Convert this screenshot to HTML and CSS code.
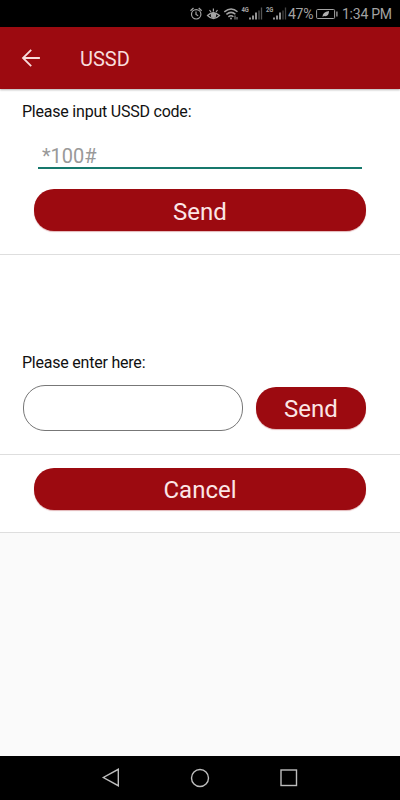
FILE: index.html
```html
<!DOCTYPE html>
<html lang="en">
<head>
<meta charset="utf-8">
<title>USSD</title>
<link rel="stylesheet" href="styles.css">
</head>
<body>
<div class="screen">
  <div class="status">
    <svg class="signals" width="100" height="26" viewBox="0 0 100 26" fill="none" stroke="#a3a3a3" stroke-width="1.2">
      <circle cx="8.2" cy="14.3" r="4.7"/><path d="M8 11.5v3l2.2 1.3M2.5 10.8l3-2.8M13.7 10.8l-3-2.8"/>
      <path d="M19.5 15.5q5.5-5.5 12 0q-6 6-12 0zM21.5 10l1.5 2M25.4 8.5v3M29.5 10l-1.5 2"/><circle cx="25.5" cy="15.3" r="2.1" fill="#a3a3a3"/>
      <path d="M36.3 11.8q7-5.5 13.2 0M38.4 14.3q4.8-3.8 9 0M40.4 16.8q2.7-2 5 0" stroke-width="1.5"/><circle cx="43" cy="18.4" r="1" fill="#a3a3a3" stroke="none"/><path d="M47 15.5v4M49 17v2.5" stroke-width="1"/>
      <text x="53.5" y="12" class="net" textLength="7" lengthAdjust="spacingAndGlyphs">4G</text>
      <path d="M62 19.5v-2M65 19.5v-4M68 19.5v-7" stroke-width="1.8"/><path d="M71 19.5v-9M73.5 19.5v-12" stroke="#555" stroke-width="1.3"/>
      <text x="78" y="12" class="net" textLength="7" lengthAdjust="spacingAndGlyphs">2G</text>
      <path d="M86 19.5v-2M89 19.5v-4M92 19.5v-7" stroke-width="1.8"/><path d="M95 19.5v-9M97.5 19.5v-12" stroke="#444" stroke-width="1.3"/>
    </svg>
    <span class="percent">47%</span>
    <svg class="battery" width="23" height="26" viewBox="0 0 23 26" fill="none" stroke="#a3a3a3"><rect x="1.6" y="9.5" width="18" height="9" rx="1"/><path d="M21.9 11.5v5" stroke-width="1.3"/><path d="M7.5 17q-.2-5 6.5-6q0 6-5 5z" fill="#b0b0b0" stroke="none"/></svg>
    <span class="clock">1:34 PM</span>
  </div>
  <header class="appbar">
    <svg width="20" height="20" viewBox="0 0 20 20" fill="none" stroke="#f8dcdc" stroke-width="1.8"><path d="M18.9 10H2.2M10.2 1.8L2 10l8.2 8.2"/></svg>
    <h1>USSD</h1>
  </header>
  <main>
    <section class="code">
      <label>Please input USSD code:</label>
      <div class="field">*100#</div>
      <button class="wide">Send</button>
    </section>
    <section class="reply">
      <label>Please enter here:</label>
      <div class="row">
        <input type="text" aria-label="Reply">
        <button>Send</button>
      </div>
    </section>
    <section class="cancel">
      <button class="wide">Cancel</button>
    </section>
  </main>
  <nav>
    <svg width="20" height="20" viewBox="0 0 20 20"><path d="M17.3 1.3v16.4L2.4 9.5z"/></svg>
    <svg width="20" height="20" viewBox="0 0 20 20"><circle cx="10" cy="10" r="8.5"/></svg>
    <svg width="20" height="20" viewBox="0 0 20 20"><rect x="2" y="2" width="15.5" height="15.5"/></svg>
  </nav>
</div>
</body>
</html>
```
FILE: styles.css
```css
* { box-sizing: border-box; }
body { margin: 0; font-family: Roboto, sans-serif; background: #fafafa; }
.screen { width: 400px; height: 800px; display: flex; flex-direction: column; overflow: hidden; }
.status { height: 27px; flex: none; background: #000; color: #a3a3a3; display: flex; padding-left: 188px; font-size: 14px; letter-spacing: -.25px; line-height: 28px; white-space: nowrap; }
.status svg { flex: none; }
.percent { width: 27px; }
.clock { padding-left: 4px; }
.net { font: bold 6.5px Roboto, sans-serif; fill: #a3a3a3; stroke: none; }
.appbar { height: 62px; flex: none; background: #9c0a10; display: flex; align-items: center; gap: 39px; padding-left: 21px; box-shadow: 0 1px 2px rgba(0,0,0,.3); z-index: 1; }
h1 { margin: 2px 0 0; font-size: 20px; font-weight: 400; color: #f8dcdc; }
main { flex: 1; }
section { background: #fff; border-bottom: 1px solid #dedede; }
label { display: block; padding-left: 22px; font-size: 16px; letter-spacing: -.22px; line-height: 20px; color: #111; }
.code { height: 166px; padding-top: 13px; }
.field { height: 33px; margin: 14px 38px 20px; padding: 8px 0 0 4px; border-bottom: 2px solid #16786c; color: #999; font-size: 20px; line-height: 24px; }
button { display: block; height: 42px; border: 0; border-radius: 20px; padding: 2px 0 0; background: #9c0a10; color: #fbe6e6; font: 24px Roboto, sans-serif; box-shadow: 0 1px 1px rgba(156,10,16,.3); }
.wide { width: 332px; margin-left: 34px; }
.code .wide { padding-top: 3px; }
.reply { height: 200px; padding-top: 98px; }
.row { display: flex; align-items: flex-start; gap: 13px; padding: 12px 0 0 23px; }
input { width: 220px; height: 46px; border: 1px solid #777; border-radius: 22px; background: #fff; padding: 0 16px; font: 20px Roboto, sans-serif; }
.row button { width: 110px; margin-top: 2px; }
.cancel { height: 78px; padding-top: 13px; }
.cancel .wide { padding-top: 1px; }
nav { height: 44px; flex: none; background: #000; display: flex; justify-content: space-between; align-items: center; padding: 0 101px; }
nav svg { fill: none; stroke: #bdbdbd; stroke-width: 1.4; }
```
